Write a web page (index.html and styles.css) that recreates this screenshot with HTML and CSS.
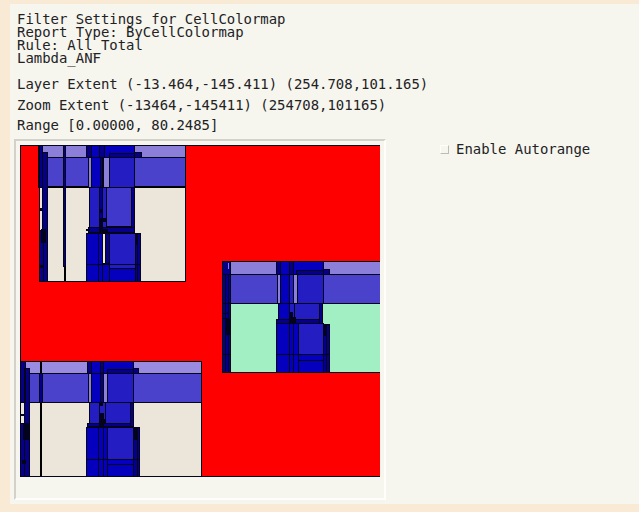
FILE: index.html
```html
<!DOCTYPE html>
<html lang="en">
<head>
<meta charset="utf-8">
<title>Filter Settings for CellColormap</title>
<link rel="stylesheet" href="styles.css">
</head>
<body>
<main class="window">
  <header class="details">
    <p class="summary">Filter Settings for CellColormap<br>Report Type: ByCellColormap<br>Rule: All_Total<br>Lambda_ANF</p>
    <p class="row">Layer Extent (-13.464,-145.411) (254.708,101.165)</p>
    <p class="row">Zoom Extent (-13464,-145411) (254708,101165)</p>
    <p class="row">Range [0.00000, 80.2485]</p>
  </header>
  <div class="content">
    <section class="viewer">
      <svg class="map" viewBox="20 145 360 332" role="img" aria-label="Cell colormap">
        <path class="red" d="M20.5 145.5H381V476.5H20.5z"/>
        <!-- Upper-left cell -->
        <path class="cream" d="M39 145.5H185.5V281.5H39z"/>
        <path class="lilac" d="M39 145.5H185.5V157.5H39z"/>
        <path class="violet" d="M39 157.5H185.5V187H39z"/>
        <path class="heavy" d="M39 187H185.5"/>
        <path class="navy" d="M38.5 145.5H42.5V187H38.5zM42.5 152.5H47.5V281.5H42.5z"/>
        <path class="navy" d="M39.5 230.5H43.5V281.5H39.5z"/>
        <path class="black" d="M39 208h4v3h-4zM41 229h5v14h-5zM39 265h4v3h-4z"/>
        <path class="navy" d="M63.5 145.5H65.5V266H63.5z"/><path class="heavy" d="M65 266V281"/>
        <path class="blue" d="M86.5 145.5H134.5V157.5H86.5z"/>
        <path class="navy" d="M86.5 145.5H91.5V157.5H86.5zM99.5 145.5H104.5V157.5H99.5zM109.5 153.5H134.5V157.5H109.5zM134.5 152.5H141.5V157.5H134.5z"/>
        <path class="lilac" d="M88.5 157.5H91.5V187H88.5zM103.5 157.5H109.5V187H103.5z"/>
        <path class="blue" d="M91.5 157.5H100.5V187H91.5z"/><path class="navy" d="M100.5 157.5H102.5V187H100.5z"/>
        <path class="royal" d="M109.5 157.5H134.5V187H109.5z"/>
        <path class="royal" d="M89.5 187.5H134.5V227.5H89.5z"/>
        <path class="indigo" d="M106.5 187.5H131.5V226.5H106.5z"/>
        <path class="navy" d="M99.5 187.5H102.5V227.5H99.5zM131.5 187.5H134.5V227.5H131.5zM88.5 227.5H134.5V232.5H88.5z"/>
        <path class="black" d="M99 209h4v4h-4zM99 218h7v4h-7zM99 222h4v10h-4zM86 229h4v2h-4zM103 229h5v4h-5z"/>
        <path class="blue" d="M86.5 233.5H98.5V281.5H86.5zM98.5 233.5H102.5V281.5H98.5zM102.5 263.5H109.5V281.5H102.5z"/>
        <path class="cream" d="M102.5 233.5H105.5V263.5H102.5z"/>
        <path class="navy" d="M105.5 233.5H109.5V263.5H105.5z"/>
        <path class="royal" d="M109.5 233.5H135.5V281.5H109.5z"/>
        <path class="blue" d="M109.5 268.5H135.5V281.5H109.5z"/>
        <path class="navy" d="M135.5 233.5H140.5V281.5H135.5z"/>
        <path class="line" d="M86 264.5H141M137.5 233V281M39 145.5V281.5H185.5V145.5"/>
        <path class="black" d="M136 233h2v12h-2z"/>
        <!-- Right cell -->
        <path class="mint" d="M222.5 261.5H381V372.5H222.5z"/>
        <path class="lilac" d="M222.5 261.5H381V274.5H222.5z"/>
        <path class="violet" d="M222.5 274.5H381V303.5H222.5z"/>
        <path class="navy" d="M222.5 261.5H230.5V372.5H222.5z"/>
        <path class="navy" d="M225.5 274.5H228.5V372.5H225.5z"/>
        <path class="lilac-fill" d="M228 263h1v6h-1z"/>
        <path class="line" d="M222 303.5H231M222 313.5H228M222 318.5H228M222 354.5H231M222 274.5H231"/>
        <path class="black" d="M226 319h4v16h-4z"/>
        <path class="blue" d="M276.5 261.5H323.5V274.5H276.5z"/>
        <path class="navy" d="M276.5 261.5H280.5V274.5H276.5zM289.5 261.5H293.5V274.5H289.5zM296.5 270.5H323.5V274.5H296.5zM323.5 269.5H329.5V274.5H323.5z"/>
        <path class="lilac" d="M277.5 274.5H280.5V303.5H277.5zM293.5 274.5H297.5V303.5H293.5z"/>
        <path class="blue" d="M280.5 274.5H289.5V303.5H280.5z"/><path class="royal" d="M289.5 274.5H293.5V303.5H289.5z"/>
        <path class="royal" d="M297.5 274.5H323.5V303.5H297.5z"/>
        <path class="blue" d="M278.5 303.5H289.5V319.5H278.5z"/>
        <path class="royal" d="M289.5 303.5H319.5V319.5H289.5zM294.5 303.5H319.5V319.5H294.5z"/>
        <path class="navy" d="M319.5 303.5H322.5V323.5H319.5zM276.5 319.5H319.5V323.5H276.5z"/>
        <path class="black" d="M289 312h4v12h-4zM292 317h4v6h-4z"/>
        <path class="blue" d="M276.5 323.5H289.5V372.5H276.5zM289.5 323.5H293.5V372.5H289.5zM293.5 323.5H298.5V372.5H293.5z"/>
        <path class="royal" d="M298.5 323.5H323.5V372.5H298.5z"/>
        <path class="navy" d="M323.5 324.5H329.5V372.5H323.5z"/>
        <path class="blue-fill" d="M299 355h24v17h-24z"/>
        <path class="line" d="M276 354.5H330M298 360.5H323M326.5 324V372M276 372.5H330"/>
        <path class="black" d="M324 324h3v12h-3z"/>
        <!-- Lower-left cell -->
        <path class="cream" d="M20.5 361.5H201.5V476.5H20.5z"/>
        <path class="lilac pale" d="M20.5 361.5H201.5V373.5H20.5z"/>
        <path class="violet" d="M20.5 373.5H201.5V402.5H20.5z"/>
        <path class="navy" d="M20.5 361.5H25.5V402.5H20.5zM24.5 368.5H29.5V476.5H24.5zM20.5 423.5H24.5V476.5H20.5z"/>
        <path class="black" d="M21 414h3v2h-3zM23 423h6v17h-6zM22 460h4v4h-4z"/>
        <path class="heavy" d="M41 361V476"/><path class="navy" d="M39.5 373.5H42.5V402.5H39.5z"/>
        <path class="blue" d="M87.5 361.5H133.5V373.5H87.5z"/>
        <path class="navy" d="M87.5 361.5H91.5V373.5H87.5zM100.5 361.5H103.5V373.5H100.5zM107.5 369.5H133.5V373.5H107.5zM133.5 368.5H138.5V373.5H133.5z"/>
        <path class="lilac" d="M88.5 373.5H91.5V402.5H88.5zM103.5 373.5H107.5V402.5H103.5z"/>
        <path class="blue" d="M91.5 373.5H100.5V402.5H91.5z"/><path class="navy" d="M100.5 373.5H103.5V402.5H100.5z"/>
        <path class="royal" d="M107.5 373.5H133.5V402.5H107.5z"/>
        <path class="royal" d="M89.5 402.5H99.5V423.5H89.5zM99.5 402.5H105.5V423.5H99.5zM105.5 402.5H130.5V423.5H105.5z"/>
        <path class="navy" d="M130.5 402.5H133.5V426.5H130.5zM87.5 423.5H130.5V426.5H87.5z"/>
        <path class="black" d="M99 403h4v3h-4zM99 413h5v14h-5zM103 419h3v4h-3z"/>
        <path class="blue" d="M86.5 427.5H98.5V476.5H86.5zM98.5 427.5H103.5V476.5H98.5zM103.5 427.5H107.5V476.5H103.5z"/>
        <path class="royal" d="M107.5 427.5H133.5V476.5H107.5z"/>
        <path class="navy" d="M133.5 427.5H139.5V476.5H133.5z"/>
        <path class="blue-fill" d="M108 460h25v16h-25z"/>
        <path class="line" d="M86 459.5H140M107 464.5H133M137.5 427V476M20.5 145V476.5H380"/>
        <path class="black" d="M134 427h3v13h-3z"/>
      </svg>
    </section>
    <label class="option"><input type="checkbox" class="check">Enable Autorange</label>
  </div>
</main>
</body>
</html>
```
FILE: styles.css
```css
body {
  margin: 0;
  height: 512px;
  box-sizing: border-box;
  padding: 4px 0 8px 10px;
  overflow: hidden;
  background: #f9ead6;
  color: #22221f;
  font: 13.95px/13px "DejaVu Sans Mono", monospace;
}
.window {
  height: 500px;
  box-sizing: border-box;
  padding: 9px 0 0 4px;
  background: #f6f5ee;
}
.details {
  height: 126px;
  padding-left: 3px;
  white-space: nowrap;
}
.summary {
  margin: 0 0 9px;
}
.row {
  margin: 0;
  height: 20.5px;
  line-height: 20px;
}
.content {
  display: flex;
  align-items: flex-start;
}
.viewer {
  box-sizing: border-box;
  width: 372px;
  height: 361px;
  padding: 4px;
  border: 2px solid;
  border-color: #d2d2cb #fffefa #fffefa #d2d2cb;
}
.map {
  display: block;
  width: 360px;
  height: 332px;
  shape-rendering: crispEdges;
}
.map path { stroke: #04041a; stroke-width: 1; }
.red { fill: #fe0000; }
.cream { fill: #ebe5da; }
.mint { fill: #a2efc3; }
.lilac { fill: #8b7fd9; }
.lilac.pale { fill: #998ce0; }
.violet { fill: #4b42cb; }
.indigo { fill: #4038ca; }
.royal { fill: #241dc1; }
.blue { fill: #0500be; }
.navy { fill: #050087; }
.black { fill: #03031e; }
.line { fill: none; }
.map .heavy { fill: none; stroke: #000; stroke-width: 2; }
.map .black, .map .blue-fill, .map .lilac-fill { stroke: none; }
.blue-fill { fill: #0500be; }
.lilac-fill { fill: #8b7fd9; }
.option {
  display: flex;
  align-items: center;
  gap: 7px;
  margin: 4px 0 0 54px;
}
.check {
  appearance: none;
  box-sizing: border-box;
  width: 9px;
  height: 9px;
  margin: 0;
  border: 1px solid;
  border-color: #fffefa #bdbcb5 #bdbcb5 #fffefa;
}
```
